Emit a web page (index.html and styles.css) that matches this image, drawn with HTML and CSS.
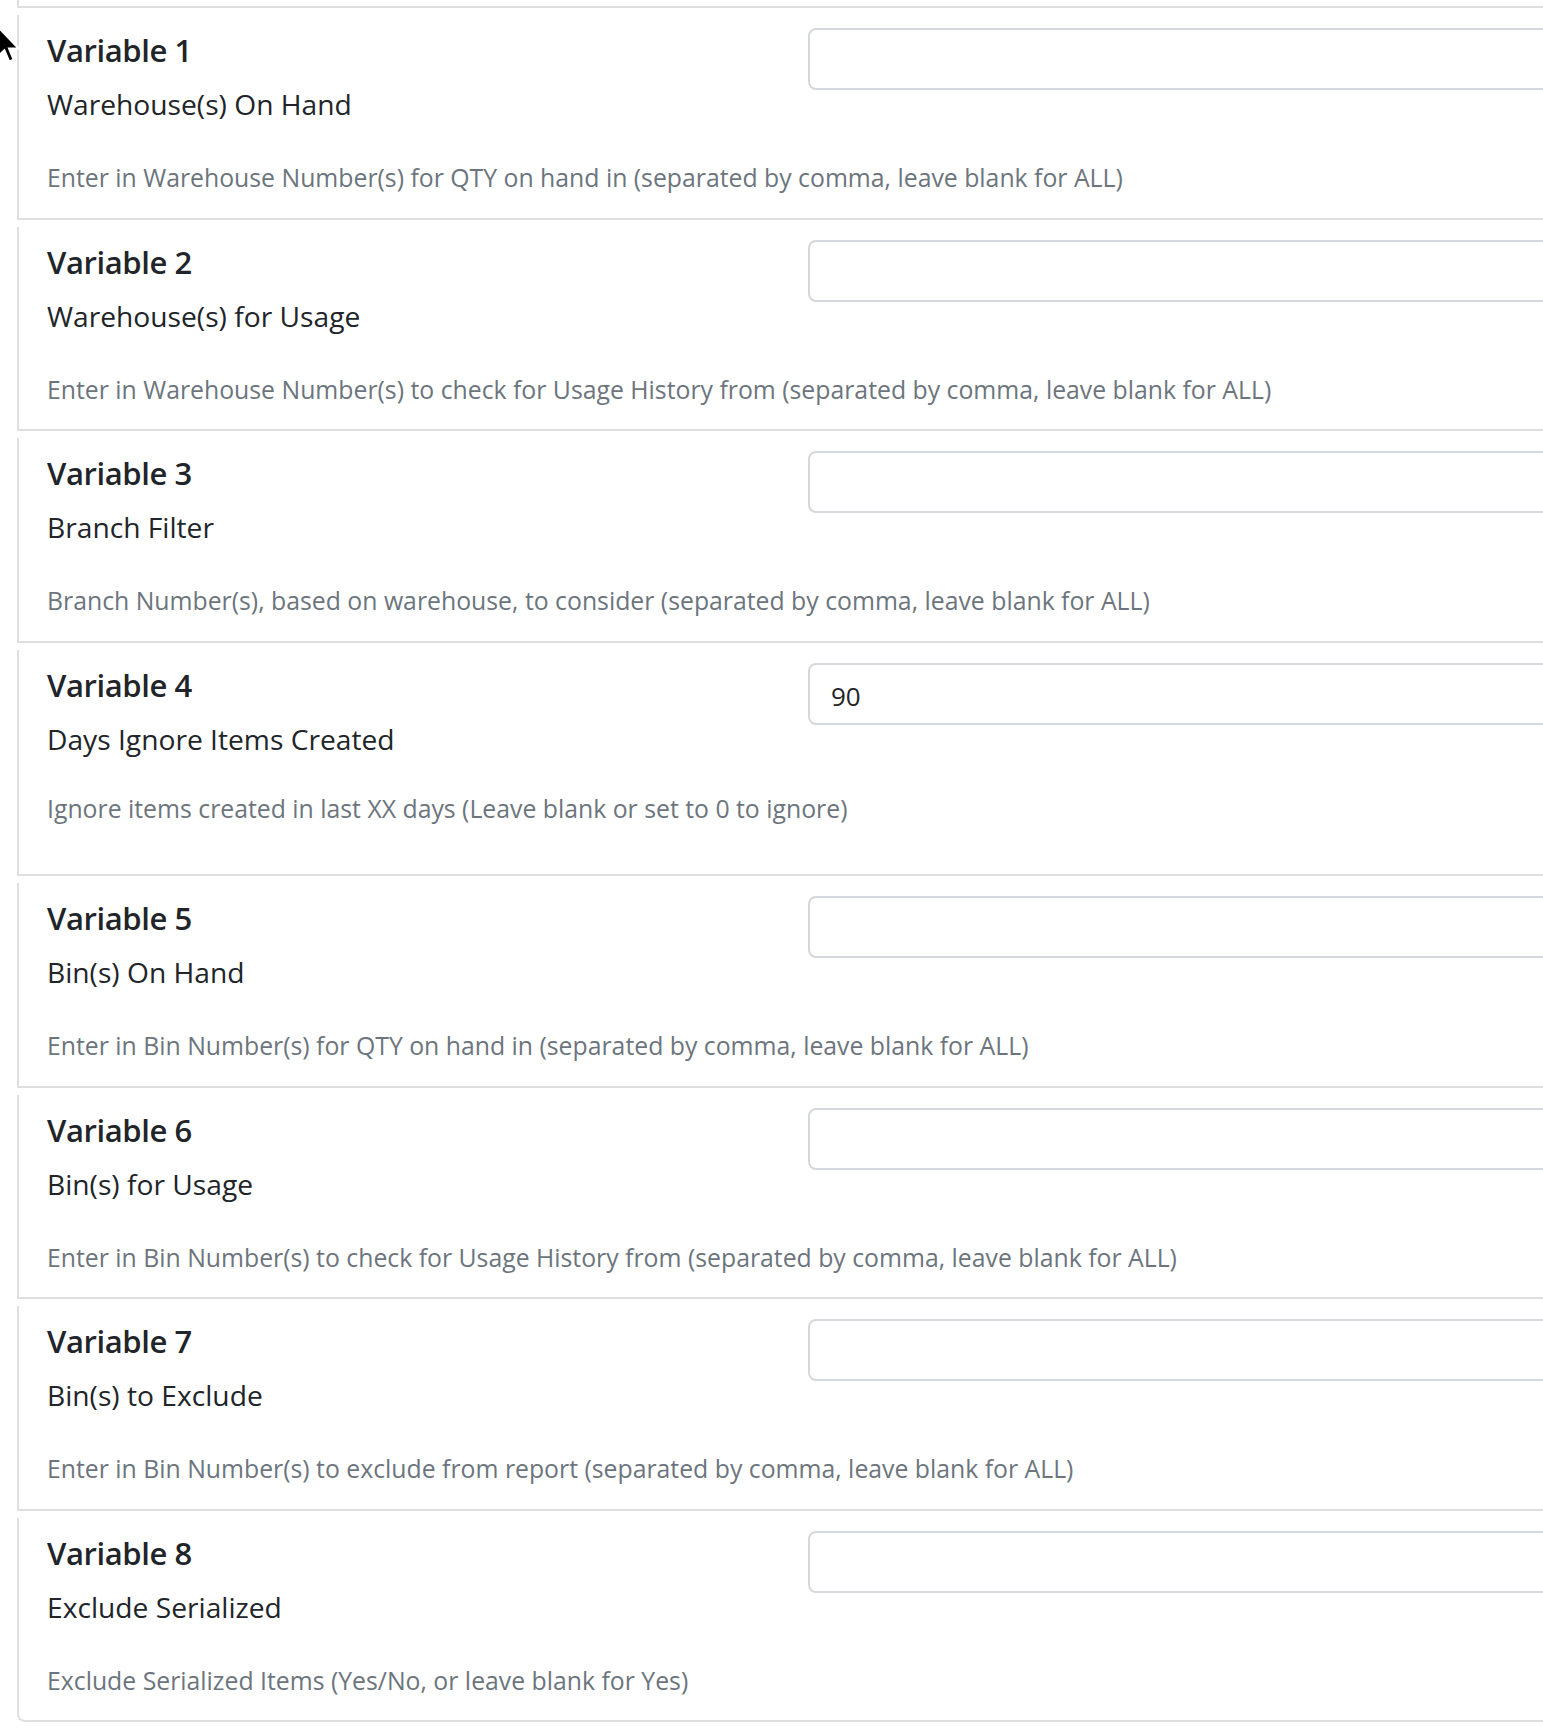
FILE: index.html
```html
<!DOCTYPE html>
<html lang="en">
<head>
    <meta charset="UTF-8">
    <link rel="stylesheet" href="styles.css">
    <title>Report Variables</title>
</head>
<body>

    <div class="var-list">
        <!-- end of the item above, scrolled out of view -->
        <div class="var-item var-item-tail"></div>

        <div class="var-item">
            <h5 class="var-title">Variable 1</h5>
            <div class="var-label">Warehouse(s) On Hand</div>
            <input type="text" class="var-input" value="">
            <small class="var-help">Enter in Warehouse Number(s) for QTY on hand in (separated by comma, leave blank for ALL)</small>
        </div>

        <div class="var-item">
            <h5 class="var-title">Variable 2</h5>
            <div class="var-label">Warehouse(s) for Usage</div>
            <input type="text" class="var-input" value="">
            <small class="var-help">Enter in Warehouse Number(s) to check for Usage History from (separated by comma, leave blank for ALL)</small>
        </div>

        <div class="var-item">
            <h5 class="var-title">Variable 3</h5>
            <div class="var-label">Branch Filter</div>
            <input type="text" class="var-input" value="">
            <small class="var-help">Branch Number(s), based on warehouse, to consider (separated by comma, leave blank for ALL)</small>
        </div>

        <div class="var-item var-item-tall">
            <h5 class="var-title">Variable 4</h5>
            <div class="var-label">Days Ignore Items Created</div>
            <input type="text" class="var-input" value="90">
            <small class="var-help">Ignore items created in last XX days (Leave blank or set to 0 to ignore)</small>
        </div>

        <div class="var-item">
            <h5 class="var-title">Variable 5</h5>
            <div class="var-label">Bin(s) On Hand</div>
            <input type="text" class="var-input" value="">
            <small class="var-help">Enter in Bin Number(s) for QTY on hand in (separated by comma, leave blank for ALL)</small>
        </div>

        <div class="var-item">
            <h5 class="var-title">Variable 6</h5>
            <div class="var-label">Bin(s) for Usage</div>
            <input type="text" class="var-input" value="">
            <small class="var-help">Enter in Bin Number(s) to check for Usage History from (separated by comma, leave blank for ALL)</small>
        </div>

        <div class="var-item">
            <h5 class="var-title">Variable 7</h5>
            <div class="var-label">Bin(s) to Exclude</div>
            <input type="text" class="var-input" value="">
            <small class="var-help">Enter in Bin Number(s) to exclude from report (separated by comma, leave blank for ALL)</small>
        </div>

        <div class="var-item var-item-last">
            <h5 class="var-title">Variable 8</h5>
            <div class="var-label">Exclude Serialized</div>
            <input type="text" class="var-input" value="">
            <small class="var-help">Exclude Serialized Items (Yes/No, or leave blank for Yes)</small>
        </div>
    </div>

    <!-- mouse pointer from the screenshot -->
    <svg class="cursor" width="24" height="38" viewBox="0 0 12 19">
        <path d="M0.5 0.5 L0.5 16 L4.2 12.6 L6.6 18.2 L8.8 17.3 L6.5 11.8 L11.3 11.8 Z" fill="#000" stroke="#fff" stroke-width="1"/>
    </svg>

</body>
</html>
```

FILE: styles.css
```css
body {
    margin: 0;
    font-family: "Open Sans", "Noto Sans", sans-serif;
    color: #212529;
    background-color: #fff;
    overflow: hidden;
}

/* list of report variables */
.var-list {
    margin-left: 17px;
    width: 1700px;
}

.var-item {
    display: grid;
    grid-template-columns: 761px 1fr;
    border-left: 2px solid #dfdfdf;
    border-bottom: 2px solid #dfdfdf;
    padding: 15px 0 22.5px 28px;
    margin-bottom: 7px;
}

.var-item-tail {
    height: 6px;
    padding: 0;
}

.var-item-tall {
    padding-bottom: 48px; /* extra room under the help text */
}

.var-item-tall .var-help {
    margin-top: 31.5px;
}

.var-item-last {
    border-bottom-left-radius: 8px;
}

.var-title {
    grid-column: 1;
    margin: 0;
    font-size: 31px;
    font-weight: 600;
    letter-spacing: -0.4px;
    line-height: 40px;
}

.var-label {
    grid-column: 1;
    margin-top: 14px;
    font-size: 28.2px;
    line-height: 40px;
}

.var-input {
    grid-column: 2;
    grid-row: 1 / span 2;
    align-self: start;
    margin-top: -2px;
    height: 62px;
    box-sizing: border-box;
    border: 2px solid #d4d8dd;
    border-radius: 8px;
    padding: 4px 21px 0;
    font-family: inherit;
    font-size: 26px;
    color: #212529;
    background-color: #fff;
    outline: none;
}

.var-help {
    grid-column: 1 / -1;
    display: block;
    margin-top: 35px;
    font-size: 24.8px;
    line-height: 36px;
    color: #6c757d;
}

.cursor {
    position: absolute;
    left: -4px;
    top: 25px;
}
```
